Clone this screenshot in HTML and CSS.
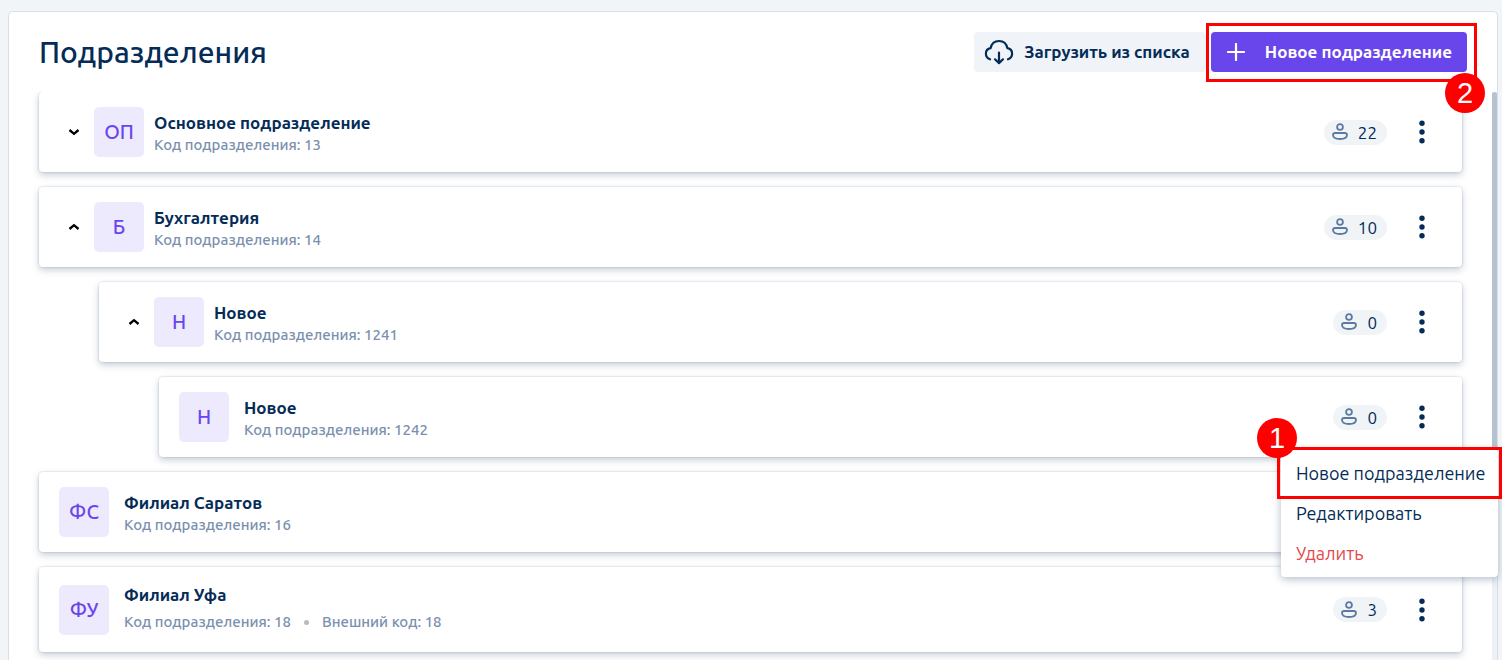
FILE: index.html
```html
<!DOCTYPE html>
<html lang="ru">
<head>
<meta charset="utf-8">
<title>Подразделения</title>
<link rel="stylesheet" href="styles.css">
</head>
<body>
<svg class="sprite" aria-hidden="true">
  <symbol id="down" viewBox="0 0 12 8"><path d="M1.500 2 6 5.800l4.500-3.800" fill="none" stroke="currentColor" stroke-width="2.300"/></symbol>
  <symbol id="up" viewBox="0 0 12 8"><path d="M1.500 6 6 2.200l4.500 3.800" fill="none" stroke="currentColor" stroke-width="2.300"/></symbol>
  <symbol id="user" viewBox="0 0 16 18"><g fill="none" stroke="currentColor" stroke-width="1.800"><circle cx="8" cy="4" r="2.900"/><path d="M3.200 10h9.600c1.400 0 2.200.8 2.200 2 0 2.700-2.500 4-7 4s-7-1.300-7-4c0-1.200.8-2 2.200-2Z"/></g></symbol>
  <symbol id="dots" viewBox="0 0 20 24"><g fill="currentColor"><circle cx="10" cy="3.300" r="2.700"/><circle cx="10" cy="12" r="2.700"/><circle cx="10" cy="20.700" r="2.700"/></g></symbol>
</svg>
<main class="panel">
  <header class="head">
    <h1 class="title">Подразделения</h1>
    <div class="tools">
      <button class="btn btn-light" type="button">
        <svg class="cloud" viewBox="0 0 30 28" aria-hidden="true"><g fill="none" stroke="currentColor" stroke-width="2.200" stroke-linecap="round" stroke-linejoin="round"><path d="M6 21.300C3.400 20.300 1.900 18.300 1.900 15.700c0-3 2-5.200 4.800-5.600C7.500 5.700 10.700 3 15 3s7.500 2.700 8.300 7.100c2.800.4 4.800 2.600 4.800 5.600 0 2.600-1.500 4.600-4.100 5.600"/><path d="M15 14.500v10.300M11 21.300l4 3.800 4-3.800"/></g></svg>
        <span>Загрузить из списка</span>
      </button>
      <div class="marked">
        <button class="btn btn-main" type="button">
          <svg class="plus" viewBox="0 0 18 18" aria-hidden="true"><path d="M9 1v16M1 9h16" stroke="currentColor" stroke-width="2.200" stroke-linecap="round"/></svg>
          <span>Новое подразделение</span>
        </button>
        <span class="frame frame-new"></span>
        <span class="badge badge-new">2</span>
      </div>
    </div>
  </header>
  <div class="scroll">
    <ul class="list">
      <li class="card">
        <button class="toggle" type="button" aria-label="Развернуть"><svg><use href="#down"/></svg></button>
        <span class="avatar">ОП</span>
        <div class="info"><h2 class="name">Основное подразделение</h2><p class="meta">Код подразделения: 13</p></div>
        <span class="count"><svg><use href="#user"/></svg>22</span>
        <button class="more" type="button" aria-label="Действия"><svg><use href="#dots"/></svg></button>
      </li>
      <li class="card">
        <button class="toggle" type="button" aria-label="Свернуть"><svg><use href="#up"/></svg></button>
        <span class="avatar">Б</span>
        <div class="info"><h2 class="name">Бухгалтерия</h2><p class="meta">Код подразделения: 14</p></div>
        <span class="count"><svg><use href="#user"/></svg>10</span>
        <button class="more" type="button" aria-label="Действия"><svg><use href="#dots"/></svg></button>
      </li>
      <li class="card level-1">
        <button class="toggle" type="button" aria-label="Свернуть"><svg><use href="#up"/></svg></button>
        <span class="avatar">Н</span>
        <div class="info"><h2 class="name">Новое</h2><p class="meta">Код подразделения: 1241</p></div>
        <span class="count"><svg><use href="#user"/></svg>0</span>
        <button class="more" type="button" aria-label="Действия"><svg><use href="#dots"/></svg></button>
      </li>
      <li class="card leaf level-2">
        <span class="avatar">Н</span>
        <div class="info"><h2 class="name">Новое</h2><p class="meta">Код подразделения: 1242</p></div>
        <span class="count"><svg><use href="#user"/></svg>0</span>
        <button class="more" type="button" aria-label="Действия"><svg><use href="#dots"/></svg></button>
      </li>
      <li class="card leaf">
        <span class="avatar">ФС</span>
        <div class="info"><h2 class="name">Филиал Саратов</h2><p class="meta">Код подразделения: 16</p></div>
      </li>
      <li class="card leaf tall">
        <span class="avatar">ФУ</span>
        <div class="info"><h2 class="name">Филиал Уфа</h2><p class="meta"><span>Код подразделения: 18</span><i class="sep"></i><span>Внешний код: 18</span></p></div>
        <span class="count"><svg><use href="#user"/></svg>3</span>
        <button class="more" type="button" aria-label="Действия"><svg><use href="#dots"/></svg></button>
      </li>
    </ul>
    <div class="track"><div class="thumb"></div></div>
  </div>
</main>
<div class="menu">
  <button class="item" type="button">Новое подразделение</button>
  <button class="item" type="button">Редактировать</button>
  <button class="item danger" type="button">Удалить</button>
  <span class="frame frame-menu"></span>
  <span class="badge badge-menu">1</span>
</div>
</body>
</html>
```
FILE: styles.css
```css
* { box-sizing: border-box; }

body {
  margin: 0;
  height: 100vh;
  padding: 11px 4px 0 8px;
  overflow: hidden;
  position: relative;
  background: #f1f5f8;
  color: #042c57;
  font-family: Ubuntu, "Noto Sans", sans-serif;
  font-size: 17px;
}

button {
  border: 0;
  padding: 0;
  background: none;
  color: inherit;
  font: inherit;
  cursor: pointer;
}

svg { display: block; flex: none; }
.sprite { position: absolute; width: 0; height: 0; }

.panel {
  height: 100%;
  display: flex;
  flex-direction: column;
  background: #fff;
  border: 1px solid #d8dfe8;
  border-bottom: 0;
  border-radius: 5px 5px 0 0;
}

.head {
  display: flex;
  justify-content: space-between;
  align-items: center;
  padding: 20px 30px;
}

.title {
  margin: 0;
  font-size: 30px;
  line-height: 40px;
  font-weight: 500;
}

.tools { display: flex; gap: 5px; }

.btn {
  display: flex;
  align-items: center;
  height: 40px;
  border-radius: 4px;
  font-weight: 600;
  line-height: 18px;
  white-space: nowrap;
}

.btn-light { background: #f0f3f7; padding: 0 16px 0 10px; gap: 10px; }
.btn-main { background: #6946eb; color: #fff; padding: 0 15px 0 16px; gap: 20px; }
.cloud { width: 30px; height: 28px; }
.plus { width: 18px; height: 18px; }
.marked { position: relative; }

.frame { position: absolute; border: 3px solid #f00; pointer-events: none; }
.frame-new { inset: -9px -10px -10px -5px; }
.frame-menu { inset: -2px -4px 78px -4px; }

.badge {
  position: absolute;
  width: 40px;
  height: 40px;
  border-radius: 50%;
  background: #f00;
  color: #fff;
  font: 29px/40px "Liberation Sans", Arial, sans-serif;
  text-align: center;
}
.badge-new { right: -18px; top: 41px; z-index: 2; }
.badge-menu { left: -24px; top: -31px; }

.scroll { flex: 1; min-height: 0; display: flex; overflow: hidden; }

.list {
  flex: 1;
  margin: 0;
  padding: 0 30px;
  list-style: none;
  display: flex;
  flex-direction: column;
  gap: 15px;
}

.card {
  flex: none;
  display: flex;
  align-items: center;
  min-height: 80px;
  padding: 0 30px 0 25px;
  background: #fff;
  border-radius: 4px;
  box-shadow: 0 0 1px 1px rgba(30, 60, 110, .08), 0 3px 7px rgba(30, 60, 100, .25);
}
.leaf { padding-left: 20px; }
.level-1 { margin-left: 60px; }
.level-2 { margin-left: 120px; }
.tall { min-height: 85px; }

.toggle { width: 20px; height: 20px; margin-right: 10px; color: #000; display: grid; place-items: center; }
.toggle svg { width: 12px; height: 8px; }

.avatar {
  width: 50px;
  height: 50px;
  margin-right: 10px;
  border-radius: 5px;
  background: #eeeafe;
  color: #6946eb;
  font-size: 20px;
  line-height: 50px;
  font-weight: 500;
  text-align: center;
}
.leaf .avatar { margin-right: 15px; }

.info { flex: 1; padding-top: 4px; }
.name { margin: 0; font-size: 17px; line-height: 22px; font-weight: 600; }
.meta {
  margin: 0;
  display: flex;
  align-items: center;
  color: #7a90ae;
  font-size: 15px;
  line-height: 22px;
  font-weight: 500;
}
.tall .meta { margin-top: 5px; }
.tall .info { padding: 0 0 2px; }
.sep { width: 5px; height: 5px; margin: 0 13px; border-radius: 50%; background: #bbb; }

.count {
  display: flex;
  align-items: center;
  gap: 10px;
  height: 25px;
  padding: 0 10px 0 8px;
  margin-right: 25px;
  border-radius: 13px;
  background: #f0f4f7;
}
.count svg { width: 16px; height: 18px; color: #5c7a9f; }
.more svg { width: 20px; height: 24px; }

.track { width: 5px; background: #edf1f5; }
.thumb { height: 70%; background: #b7c2d0; border-radius: 3px; }

.menu {
  position: absolute;
  right: 4px;
  top: 449px;
  padding: 4px 0;
  width: 217px;
  background: #fff;
  border-radius: 4px;
  box-shadow: 0 2px 8px rgba(30, 60, 100, .35);
}
.item { display: block; width: 100%; height: 40px; padding: 0 15px; font-size: 18px; line-height: 20px; text-align: left; white-space: nowrap; }
.danger { color: #e5484d; }
```
